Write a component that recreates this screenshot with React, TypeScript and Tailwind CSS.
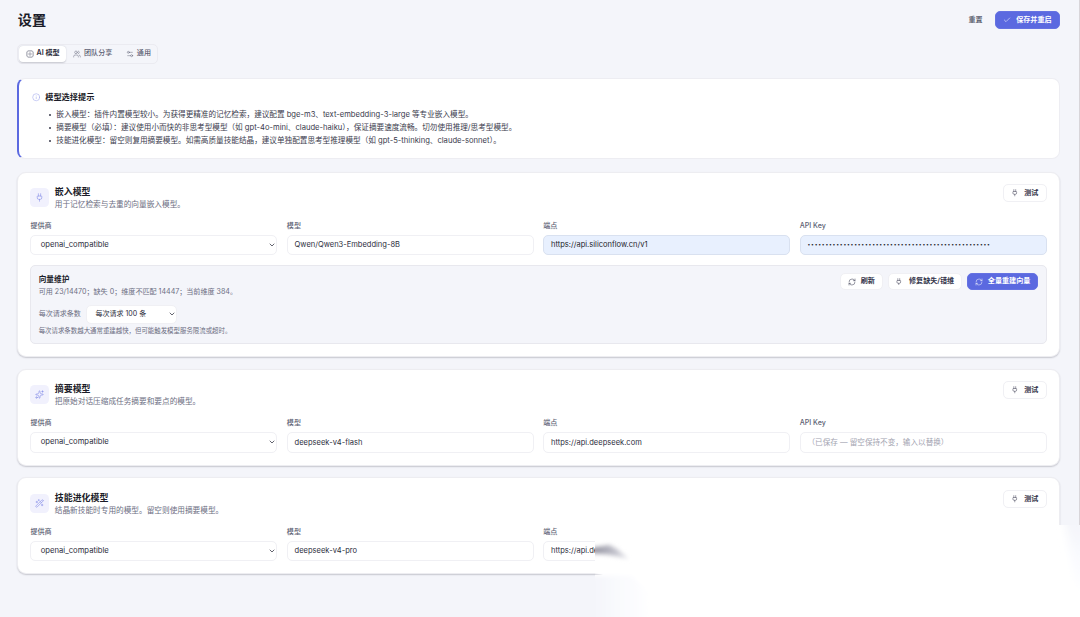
import * as React from "react";
import {
  Check,
  ChevronDown,
  Info,
  Plug,
  RefreshCw,
  Settings2,
  Sparkles,
  Users,
  WandSparkles,
} from "lucide-react";
import { cva } from "class-variance-authority";

const buttonStyle = cva(
  "inline-flex h-[17.5px] shrink-0 items-center justify-center whitespace-nowrap rounded-[5px] border text-[7.08px] font-semibold",
  {
    variants: {
      variant: {
        primary: "border-[#6572e2] bg-[#5b69e0] text-white",
        outline: "border-[#f0f0f4] bg-white text-[#33344a]",
      },
    },
  }
);

const fieldStyle = cva(
  "flex h-[20.6px] items-center whitespace-nowrap rounded-[5px] border",
  {
    variants: {
      filled: {
        true: "border-[#d9e1f0] bg-[#e8f0fe] text-[#1b1c28]",
        false: "border-[#f0f0f4] bg-white text-[#2c2d3c]",
      },
    },
  }
);

function ChipIcon() {
  return (
    <svg
      width="8"
      height="8"
      viewBox="0 0 24 24"
      fill="none"
      stroke="currentColor"
      strokeWidth="1.6"
      className="text-[#5d5f74]"
    >
      <rect x="3" y="3" width="18" height="18" rx="3" />
      <rect x="9" y="9" width="6" height="6" rx="1" />
      <path d="M9 1v2M15 1v2M9 21v2M15 21v2M1 9h2M1 15h2M21 9h2M21 15h2" />
    </svg>
  );
}

function Field({
  label,
  children,
}: {
  label: string;
  children: React.ReactNode;
}) {
  return (
    <div className="min-w-0">
      <div className="mb-[3.6px] h-[10px] text-[7.08px] font-medium leading-[10px] text-[#5d5f74]">
        {label}
      </div>
      {children}
    </div>
  );
}

function ModelCard({
  icon,
  title,
  desc,
  model,
  endpoint,
  apiKey,
  filled = false,
  children,
}: {
  icon: React.ReactNode;
  title: string;
  desc: string;
  model: string;
  endpoint: string;
  apiKey: React.ReactNode;
  filled?: boolean;
  children?: React.ReactNode;
}) {
  return (
    <section className="rounded-[9px] border border-[#ededf1] bg-white px-[12px] pt-[11.4px] pb-[12px] shadow-[0_1px_1.5px_rgba(20,20,40,0.2)]">
      <div className="flex h-[37.2px] items-start justify-between">
        <div className="flex items-start">
          <div className="mt-[3.8px] flex size-[19px] items-center justify-center rounded-[4.5px] bg-[#f1f1fd] text-[#7d86e6]">
            {icon}
          </div>
          <div className="ml-[5.4px]">
            <div className="mt-[0.8px] text-[8.95px] font-semibold leading-[13px] text-[#1b1c28]">
              {title}
            </div>
            <div className="mt-[1.2px] text-[7.67px] leading-[12px] text-[#6c6e82]">
              {desc}
            </div>
          </div>
        </div>
        <div className={buttonStyle({ variant: "outline" }) + " mt-[0.3px] w-[43.5px] gap-[5.5px]"}>
          <Plug size={7.5} strokeWidth={1.5} />
          测试
        </div>
      </div>
      <div className="grid grid-cols-4 gap-[9.5px]">
        <Field label="提供商">
          <div className={fieldStyle({ filled: false }) + " justify-between pl-[9.4px] text-[7.67px]"}>
            openai_compatible
            <ChevronDown size={8} strokeWidth={2.2} />
          </div>
        </Field>
        <Field label="模型">
          <div className={fieldStyle({ filled: false }) + " pl-[6.8px] text-[7.54px]"}>
            {model}
          </div>
        </Field>
        <Field label="端点">
          <div className={fieldStyle({ filled }) + " pl-[6.8px] text-[7.54px]"}>
            {endpoint}
          </div>
        </Field>
        <Field label="API Key">
          <div className={fieldStyle({ filled }) + " pl-[6.8px] text-[7.6px]"}>
            {apiKey}
          </div>
        </Field>
      </div>
      {children}
    </section>
  );
}

function VectorPanel() {
  return (
    <div className="mt-[9.5px] h-[79px] rounded-[5px] border border-[#e8e8ee] bg-[#f4f5fa] px-[7.3px] pt-[7px]">
      <div className="flex items-start justify-between">
        <div>
          <div className="mt-[0.8px] text-[7.67px] font-semibold leading-[12px] text-[#1b1c28]">
            向量维护
          </div>
          <div className="text-[7.08px] leading-[12.6px] text-[#6c6e82]">
            可用 23/14470；缺失 0；维度不匹配 14447；当前维度 384。
          </div>
        </div>
        <div className="flex gap-[5px]">
          <div className={buttonStyle({ variant: "outline" }) + " w-[43px] gap-[5px]"}>
            <RefreshCw size={8} strokeWidth={1.5} />
            刷新
          </div>
          <div className={buttonStyle({ variant: "outline" }) + " w-[74px] gap-[6px]"}>
            <Plug size={7.5} strokeWidth={1.5} />
            修复缺失/错维
          </div>
          <div className={buttonStyle({ variant: "primary" }) + " w-[71.5px] gap-[5px]"}>
            <RefreshCw size={8} strokeWidth={1.5} />
            全量重建向量
          </div>
        </div>
      </div>
      <div className="mt-[6.3px] flex items-center text-[7.04px] text-[#6c6e82]">
        每次请求条数
        <div className="ml-[5px] flex h-[19.5px] w-[91px] items-center justify-between rounded-[5px] border border-[#f0f0f4] bg-white pl-[8.5px] text-[#2c2d3c]">
          每次请求 100 条
          <ChevronDown size={8} strokeWidth={2.2} />
        </div>
      </div>
      <div className="mt-[2.2px] text-[6.43px] leading-[11px] text-[#6c6e82]">
        每次请求条数越大通常重建越快，但可能触发模型服务限流或超时。
      </div>
    </div>
  );
}

const tips = [
  "嵌入模型：插件内置模型较小。为获得更精准的记忆检索，建议配置 bge-m3、text-embedding-3-large 等专业嵌入模型。",
  "摘要模型（必填）：建议使用小而快的非思考型模型（如 gpt-4o-mini、claude-haiku），保证摘要速度流畅。切勿使用推理/思考型模型。",
  "技能进化模型：留空则复用摘要模型。如需高质量技能结晶，建议单独配置思考型推理模型（如 gpt-5-thinking、claude-sonnet）。",
];

// soft white patch that fades out the lower right corner
function CornerFade() {
  return (
    <svg
      className="pointer-events-none absolute top-[500px] left-[580px]"
      width="500"
      height="117"
      viewBox="580 500 500 117"
    >
      <defs>
        <linearGradient id="fadeLeft" x1="595" x2="652" y1="0" y2="0" gradientUnits="userSpaceOnUse">
          <stop offset="0" stopColor="#f4f5fa" />
          <stop offset="0.3" stopColor="#f8f9fd" />
          <stop offset="1" stopColor="#ffffff" />
        </linearGradient>
        <linearGradient id="fadeRight" x1="0" x2="0" y1="525" y2="598" gradientUnits="userSpaceOnUse">
          <stop offset="0" stopColor="#f4f5fa" />
          <stop offset="0.4" stopColor="#f9fafe" />
          <stop offset="1" stopColor="#ffffff" />
        </linearGradient>
        <linearGradient id="smear" x1="593" x2="632" y1="0" y2="0" gradientUnits="userSpaceOnUse">
          <stop offset="0" stopColor="#8f8f9d" />
          <stop offset="0.55" stopColor="#c0c0ca" />
          <stop offset="1" stopColor="#f4f4f7" />
        </linearGradient>
        <filter id="soft" x="-30%" y="-60%" width="160%" height="220%">
          <feGaussianBlur stdDeviation="2.2" />
        </filter>
        <filter id="softer" x="-30%" y="-30%" width="160%" height="160%">
          <feGaussianBlur stdDeviation="4" />
        </filter>
        <clipPath id="patch">
          <rect x="595" y="525" width="485" height="92" />
        </clipPath>
      </defs>
      <g clipPath="url(#patch)">
        <rect x="595" y="525" width="485" height="92" fill="#ffffff" />
        <path d="M575 576 L632 576 L648 592 L656 640 L575 640 Z" fill="url(#fadeLeft)" filter="url(#soft)" />
        <path d="M1063 510 H1100 V610 L1076 585 Z" fill="url(#fadeRight)" filter="url(#softer)" />
        <path d="M585 549 L609 545 L617 549 L629 559 L608 554.5 L585 552.5 Z" fill="url(#smear)" filter="url(#soft)" />
        <path d="M590 573.5 L603 574.2 L590 575.2 Z" fill="#cfcfd6" />
      </g>
    </svg>
  );
}

export default function App() {
  return (
    <div className="relative h-[617px] w-[1080px] overflow-hidden bg-[#f4f5fa] pt-[11.3px] pr-[20.4px] pl-[17.4px] font-['Inter','Noto_Sans_CJK_SC',sans-serif] text-[#1b1c28]">
      <header className="flex h-[17.5px] items-center justify-between">
        <h1 className="mb-[1.5px] pl-[0.4px] text-[14.2px] font-semibold leading-[17px]">设置</h1>
        <div className="flex items-center">
          <span className="mr-[12.5px] text-[7.08px] font-medium text-[#4b4d61]">
            重置
          </span>
          <div className={buttonStyle({ variant: "primary" }) + " w-[64.5px] gap-[5px]"}>
            <Check size={8} strokeWidth={1.6} />
            保存并重启
          </div>
        </div>
      </header>

      <nav className="mt-[15px] flex h-[20px] w-[140.5px] items-center rounded-[5px] border border-[#ebebf1] pl-[1px] text-[7.08px] font-medium text-[#5d5f74]">
        <div className="flex h-[16px] w-[46.3px] items-center justify-center gap-[3px] rounded-[4px] bg-white font-semibold text-[#2c2d3c] shadow-[0_0.5px_1.5px_rgba(20,20,40,0.2)]">
          <ChipIcon />
          AI 模型
        </div>
        <div className="ml-[7.3px] flex items-center gap-[3px]">
          <Users size={8} strokeWidth={1.4} />
          团队分享
        </div>
        <div className="ml-[13.5px] flex items-center gap-[3px]">
          <Settings2 size={8} strokeWidth={1.4} />
          通用
        </div>
      </nav>

      <section className="mt-[14.7px] h-[81px] rounded-[8px] border border-l-2 border-[#ededf2] border-l-[#5b69e0] bg-white pt-[11.3px] pl-[12.3px]">
        <div className="flex items-center text-[8.2px] font-semibold leading-[13px]">
          <Info size={8.5} strokeWidth={1.3} className="mr-[5px] text-[#8d95ea]" />
          模型选择提示
        </div>
        <ul className="mt-[4.7px] pl-[17px] text-[7.61px] leading-[13px] text-[#3a3b4d]">
          {tips.map((tip) => (
            <li key={tip} className="flex items-center gap-[5px] whitespace-nowrap">
              <span className="size-[2.6px] rounded-full bg-[#3a3b4d]" />
              {tip}
            </li>
          ))}
        </ul>
      </section>

      <main className="mt-[12.1px] flex flex-col gap-[11.9px]">
        <ModelCard
          icon={<Plug size={9} strokeWidth={1.5} />}
          title="嵌入模型"
          desc="用于记忆检索与去重的向量嵌入模型。"
          model="Qwen/Qwen3-Embedding-8B"
          endpoint="https://api.siliconflow.cn/v1"
          apiKey={
            <span className="text-[5px] tracking-[0.78px]">{"•".repeat(51)}</span>
          }
          filled
        >
          <VectorPanel />
        </ModelCard>
        <ModelCard
          icon={<Sparkles size={9} strokeWidth={1.5} />}
          title="摘要模型"
          desc="把原始对话压缩成任务摘要和要点的模型。"
          model="deepseek-v4-flash"
          endpoint="https://api.deepseek.com"
          apiKey={
            <span className="text-[#a3a4b1]">
              （已保存 — 留空保持不变，输入以替换）
            </span>
          }
        />
        <ModelCard
          icon={<WandSparkles size={9} strokeWidth={1.5} />}
          title="技能进化模型"
          desc="结晶新技能时专用的模型。留空则使用摘要模型。"
          model="deepseek-v4-pro"
          endpoint="https://api.deepseek.com"
          apiKey=""
        />
      </main>

      <div className="absolute top-0 right-0 h-[525px] w-px bg-[#d8d5d9]" />
      <CornerFade />
    </div>
  );
}
